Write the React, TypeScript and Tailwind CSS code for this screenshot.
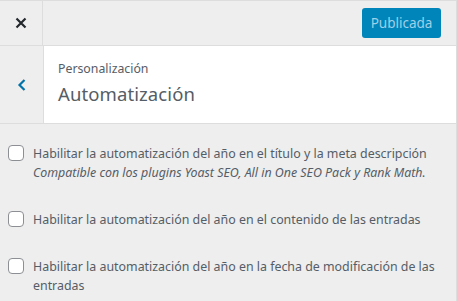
import React from "react";

const options = [
  {
    label: "Habilitar la automatización del año en el título y la meta descripción",
    note: "Compatible con los plugins Yoast SEO, All in One SEO Pack y Rank Math.",
  },
  { label: "Habilitar la automatización del año en el contenido de las entradas" },
  { label: "Habilitar la automatización del año en la fecha de modificación de las entradas" },
];

const App = () => {
  return (
    <div
      className="w-[457px] h-[301px] overflow-hidden bg-[#eeeeee] text-[#555d66] border-t border-[#dddddd] border-r"
      style={{ fontFamily: '"Noto Sans", "Open Sans", sans-serif' }}
    >
      {/* Top bar */}
      <div className="flex h-[45px] border-b border-[#dddddd]">
        <button className="w-[43px] flex items-center justify-center border-r border-[#dddddd] text-[#23282d]">
          <svg width="12" height="12" viewBox="0 0 12 12">
            <path d="M1.5 1.5 L10.5 10.5 M10.5 1.5 L1.5 10.5" stroke="currentColor" strokeWidth="2.2" />
          </svg>
        </button>
        <div className="flex-1 flex items-center justify-end pr-[15px]">
          <button className="h-[30px] w-[79px] rounded-[3px] bg-[#0085ba] text-[#9fd0e8] text-[13.5px]">
            Publicada
          </button>
        </div>
      </div>

      {/* Section header */}
      <div className="flex h-[78px] border-b border-[#dddddd]">
        <button className="w-[44px] flex items-center justify-center border-r border-[#dddddd] text-[#0073aa]">
          <svg width="10" height="14" viewBox="0 0 10 14">
            <path d="M7.5 2 L2.5 7 L7.5 12" stroke="currentColor" strokeWidth="2.2" fill="none" />
          </svg>
        </button>
        <div className="flex-1 bg-white pl-[14px] pt-[15px]">
          <div className="text-[12.3px] leading-[16px]">Personalización</div>
          <div className="text-[18.5px] leading-[28px] mt-[3px] tracking-[0.1px]">Automatización</div>
        </div>
      </div>

      {/* Options */}
      <div className="flex flex-col gap-[28px] pt-[20px] pl-[8px] pr-[12px]">
        {options.map((o) => (
          <label key={o.label} className="flex items-start gap-[9px] text-[12.4px] leading-[19px]">
            <span className="mt-[1px] shrink-0 w-[16px] h-[16px] rounded-[4px] border border-[#8c8f94] bg-white" />
            <span>
              {o.label}
              {o.note && <em className="block">{o.note}</em>}
            </span>
          </label>
        ))}
      </div>
    </div>
  );
};

export default App;
